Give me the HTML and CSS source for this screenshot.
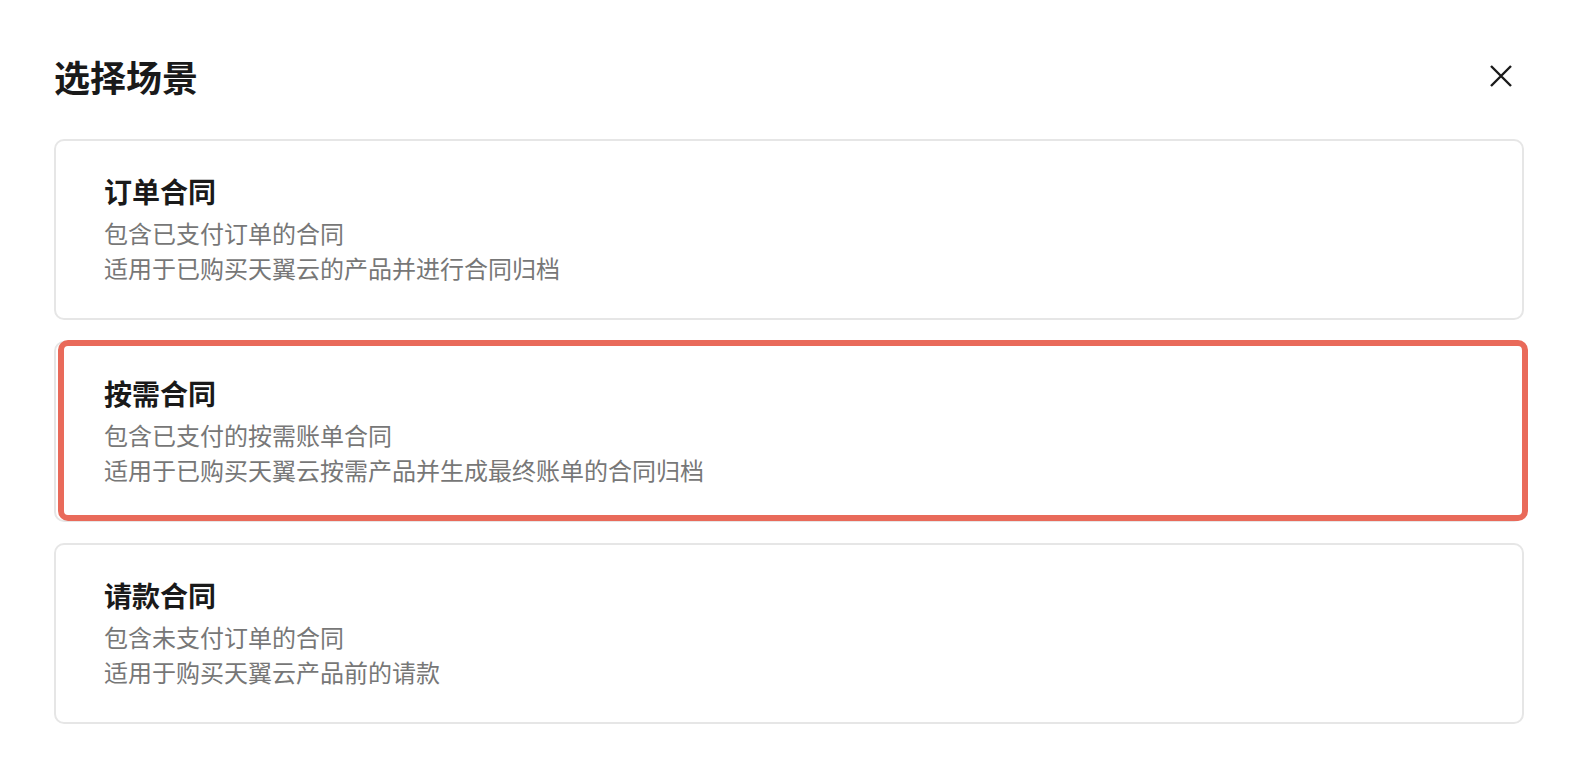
FILE: index.html
```html
<html lang="zh-CN">

<head>
    <meta charset="UTF-8">
    <meta name="viewport" content="width=device-width, initial-scale=1.0">
    <title>选择场景</title>

    <link rel="stylesheet" href="styles.css">
</head>

<body>
    <div class="dialog">
        <header>
            <div class="title">选择场景</div>
            <button class="close" type="button" aria-label="关闭">
                <svg width="22" height="22" viewBox="0 0 22 22">
                    <path d="M1 1 L21 21 M21 1 L1 21" stroke="#1a1a1a" stroke-width="2.4" fill="none" />
                </svg>
            </button>
        </header>
        <main>
            <div class="card">
                <div class="card-title">订单合同</div>
                <div class="card-desc">
                    <div>包含已支付订单的合同</div>
                    <div>适用于已购买天翼云的产品并进行合同归档</div>
                </div>
            </div>
            <div class="card selected">
                <div class="card-title">按需合同</div>
                <div class="card-desc">
                    <div>包含已支付的按需账单合同</div>
                    <div>适用于已购买天翼云按需产品并生成最终账单的合同归档</div>
                </div>
            </div>
            <div class="card">
                <div class="card-title">请款合同</div>
                <div class="card-desc">
                    <div>包含未支付订单的合同</div>
                    <div>适用于购买天翼云产品前的请款</div>
                </div>
            </div>
        </main>
    </div>
</body>

</html>
```

FILE: styles.css
```css
* {
    box-sizing: border-box;
    margin: 0;
    padding: 0;
}

html,
body {
    height: 100%;
    background: white;
}

body {
    font-family: "Noto Sans CJK SC", "Noto Sans", sans-serif;
    color: #1a1a1a;
}

.dialog {
    padding: 40px 62px 0 54px;
}

header {
    height: 72px;
    display: flex;
    justify-content: space-between;
    align-items: center;
    margin-bottom: 27px;
}

.title {
    font-size: 36px;
    font-weight: 700;
    line-height: 72px;
}

.close {
    width: 22px;
    height: 22px;
    margin-right: 12px;
    border: 0;
    background: none;
    display: grid;
    place-items: center;
}

main {
    display: flex;
    flex-direction: column;
    gap: 21px;
}

.card {
    position: relative;
    height: 181px;
    border: 2px solid #e6e6e6;
    border-radius: 10px;
    padding: 30px 48px 0 48px;
}

.card-title {
    font-size: 28px;
    font-weight: 700;
    line-height: 40px;
    color: #1a1a1a;
}

.card-desc {
    margin-top: 4px;
    font-size: 24px;
    line-height: 35px;
    color: #777777;
}

/* highlight drawn over the selected card */
.selected::after {
    content: "";
    position: absolute;
    top: -3px;
    bottom: -1px;
    left: 2px;
    right: -6px;
    border: 6px solid #e96a5a;
    border-radius: 10px;
}
```
